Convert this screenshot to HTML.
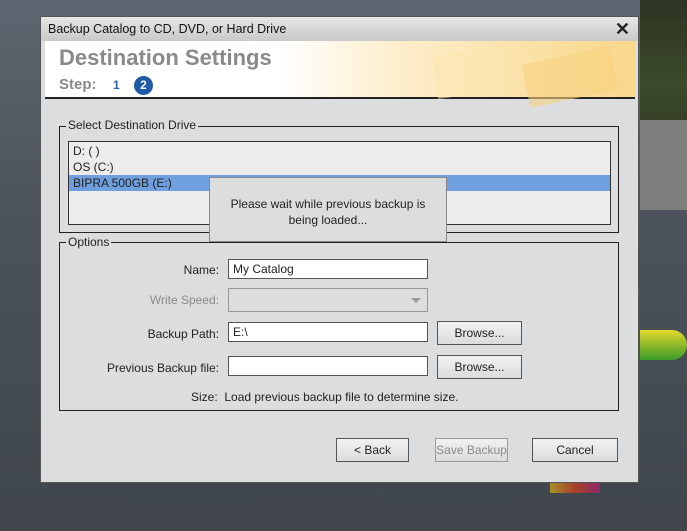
<!DOCTYPE html>
<html><head><style>
*{margin:0;padding:0;box-sizing:border-box}
body{width:687px;height:531px;overflow:hidden;position:relative;font-family:"Liberation Sans",sans-serif;font-size:12px;color:#222;
background:linear-gradient(180deg,#5d6670 0%,#4c535b 40%,#3f454b 100%)}
.abs{position:absolute}
.dlg{left:40px;top:16px;width:599px;height:467px;background:#dcdddf;border:1px solid #555}
.tb{left:0;top:0;width:597px;height:24px;background:linear-gradient(#e6e6e6,#c9c9c9);font-size:12.5px;padding:5px 0 0 7px;color:#111}
.hd{left:4px;top:24px;width:590px;height:58px;background:linear-gradient(90deg,#fff 0%,#fff 40%,#fdeecb 60%,#f9d78a 100%);border-bottom:2px solid #222}
.fs{border:1px solid #222}
.lg{background:#dcdddf;padding:0 2px;font-size:12px;color:#222}
.inp{background:#fff;border:1px solid #555;height:20px;padding:2px 4px;font-size:12px}
.btn{background:linear-gradient(#f2f2f2,#dcdcdc);border:1px solid #555;text-align:center;font-size:12px;line-height:22px;height:24px}
.lbl{text-align:right;width:170px;left:8px}
</style></head><body>
<div class="abs" style="left:640px;top:0;width:47px;height:170px;background:linear-gradient(#2c3422,#3d4a2a 50%,#2b311f)"></div>
<div class="abs" style="left:640px;top:120px;width:47px;height:90px;background:#7d7f7c"></div>
<div class="abs" style="left:640px;top:330px;width:47px;height:30px;background:linear-gradient(#e4d92a,#3a9a2a);border-radius:0 20px 20px 0"></div>
<div class="abs" style="left:550px;top:483px;width:50px;height:10px;background:linear-gradient(90deg,#c0a020,#c04020,#a02070);opacity:.8"></div>
<div class="abs dlg">
 <div class="abs tb">Backup Catalog to CD, DVD, or Hard Drive</div>
 <div class="abs" style="right:8px;top:2px;font-size:18px;font-weight:bold;color:#222">✕</div>
 <div class="abs hd">
  <div class="abs" style="left:14px;top:4px;font-size:22px;font-weight:bold;color:#8a8a8a">Destination Settings</div>
  <div class="abs" style="left:14px;top:35px;font-size:15px;font-weight:bold;color:#8a8a8a">Step:</div>
  <div class="abs" style="left:68px;top:37px;font-size:12px;font-weight:bold;color:#2a5ea8">1</div>
  <div class="abs" style="left:89px;top:35px;width:19px;height:19px;border-radius:50%;background:#1f5aa6;color:#fff;font-weight:bold;text-align:center;line-height:19px;font-size:12px">2</div>
  <div class="abs" style="left:390px;top:10px;width:60px;height:44px;background:#fbe6b0;transform:rotate(-8deg);opacity:.6"></div>
  <div class="abs" style="left:480px;top:14px;width:90px;height:44px;background:#f7d280;transform:rotate(-12deg);opacity:.6"></div>
 </div>
 <div class="abs fs" style="left:18px;top:109px;width:560px;height:107px"></div>
 <div class="abs lg" style="left:25px;top:101px">Select Destination Drive</div>
 <div class="abs" style="left:27px;top:124px;width:543px;height:84px;background:#ececec;border:1px solid #333"></div>
 <div class="abs" style="left:32px;top:127px;line-height:15.5px">D: ( )<br>OS (C:)</div>
 <div class="abs" style="left:28px;top:158px;width:541px;height:16px;background:#6f9fdc;padding:1px 4px;line-height:14px">BIPRA 500GB (E:)</div>
 <div class="abs" style="left:168px;top:160px;width:238px;height:65px;background:#dcdddf;border:1px solid #888;text-align:center;padding-top:18px;line-height:16px">Please wait while previous backup is<br>being loaded...</div>
 <div class="abs fs" style="left:18px;top:225px;width:560px;height:169px"></div>
 <div class="abs lg" style="left:25px;top:218px">Options</div>
 <div class="abs lbl" style="top:246px">Name:</div>
 <div class="abs inp" style="left:187px;top:242px;width:200px">My Catalog</div>
 <div class="abs lbl" style="top:276px;color:#8a8a8a">Write Speed:</div>
 <div class="abs" style="left:187px;top:271px;width:200px;height:24px;border:1px solid #999;background:#dcdddf"></div>
 <div class="abs" style="left:370px;top:281px;width:0;height:0;border-left:5px solid transparent;border-right:5px solid transparent;border-top:5px solid #999"></div>
 <div class="abs lbl" style="top:310px">Backup Path:</div>
 <div class="abs inp" style="left:187px;top:305px;width:200px">E:\</div>
 <div class="abs btn" style="left:396px;top:304px;width:85px">Browse...</div>
 <div class="abs lbl" style="top:344px">Previous Backup file:</div>
 <div class="abs inp" style="left:187px;top:339px;width:200px"></div>
 <div class="abs btn" style="left:396px;top:338px;width:85px">Browse...</div>
 <div class="abs" style="left:150px;top:373px">Size:&nbsp; Load previous backup file to determine size.</div>
 <div class="abs btn" style="left:295px;top:421px;width:73px">&lt; Back</div>
 <div class="abs btn" style="left:394px;top:421px;width:73px;color:#8a8a8a;border-color:#999">Save Backup</div>
 <div class="abs btn" style="left:491px;top:421px;width:86px">Cancel</div>
</div>
</body></html>
